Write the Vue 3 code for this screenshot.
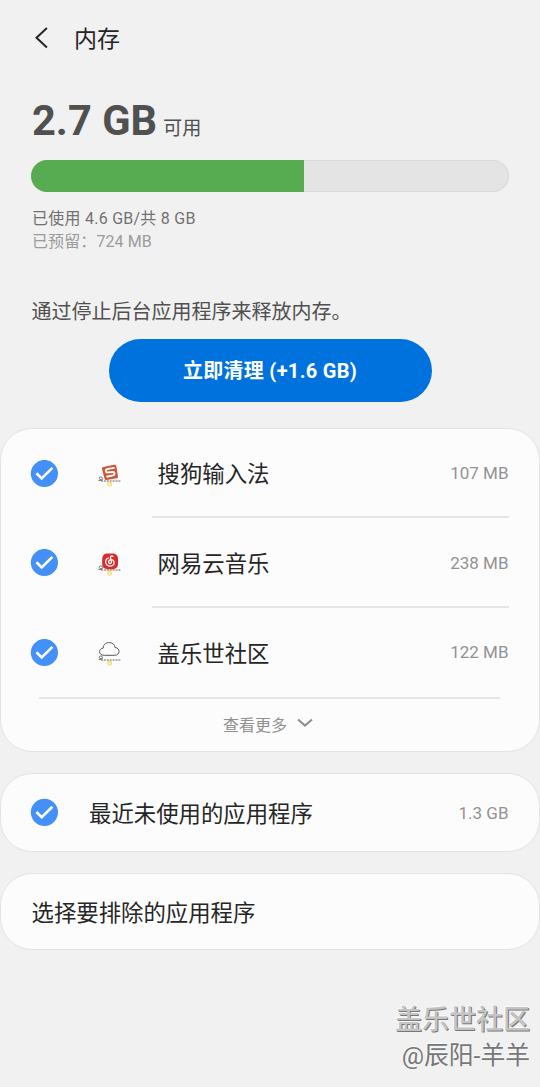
<script setup>
const apps = [
  { name: '搜狗输入法', size: '107 MB', icon: 'sogou' },
  { name: '网易云音乐', size: '238 MB', icon: 'music' },
  { name: '盖乐世社区', size: '122 MB', icon: 'cloud' },
]
const usedPercent = 57.1
</script>

<template>
  <main class="screen">
    <header class="bar">
      <svg class="back" width="16" height="24" viewBox="0 0 16 24">
        <path d="M13.900 1.900 3.500 11.700l10.400 9.800" fill="none" stroke="#252525" stroke-width="2" />
      </svg>
      <h1>内存</h1>
    </header>

    <section class="summary">
      <div class="free"><strong>2.7 GB</strong><span>可用</span></div>
      <div class="track"><div class="fill" :style="{ width: usedPercent + '%' }"></div></div>
      <p class="used">已使用 4.6 GB/共 8 GB</p>
      <p class="reserved">已预留：724 MB</p>
      <p class="tip">通过停止后台应用程序来释放内存。</p>
      <button class="clean">立即清理 (+1.6 GB)</button>
    </section>

    <section class="card list">
      <div v-for="app in apps" :key="app.name" class="row">
        <svg class="check" width="28" height="28" viewBox="0 0 28 28">
          <circle cx="14.400" cy="13.500" r="13.600" fill="#4290f8" />
          <path d="m6.400 13.200 5.300 5.200L22.400 7.900" fill="none" stroke="#fff" stroke-width="2.600" />
        </svg>
        <svg class="icon" width="28" height="28" viewBox="0 0 28 28">
          <g v-if="app.icon === 'sogou'" transform="translate(0 1.800)">
            <path d="M8.300 6.300 19 4q2-.3 2.300 1.300L23 15.600q.2 1.500-1.300 1.800L11.500 19.300q-1.700.2-2-1.500L7 8.100q-.2-1.500 1.300-1.800z" fill="#cd5636" />
            <path d="M19.600 7.100 12.800 8.100q-2.300.4-2 2.100t2.400 1.400l4.300-.4q1.900-.1 2.100 1.400t-1.600 2l-6.500 1.300" fill="none" stroke="#fff" stroke-width="1.900" />
          </g>
          <g v-else-if="app.icon === 'music'" transform="translate(-.3 2.500)">
            <rect x="7.500" y="3" width="15.800" height="15.800" rx="5" fill="#dc2a2b" />
            <path d="M18.200 5.900c-1.300-.9-2.700-.2-2.400 1.200l.9 3.900c.3 1.400-.6 2.200-1.600 2-2-.5-1.500-3.500.8-3.800 3.500-.3 4.600 3.500 2.300 5.500-2.500 1.900-6.800.7-7.200-2.500-.3-2.200.8-4 2.600-4.700" fill="none" stroke="#fff" stroke-width="1.300" stroke-linecap="round" />
          </g>
          <path v-else d="M9.300 17.300C3.300 17.300 3.100 10.800 8.200 10.100 8.400 6 11.400 4.400 14.400 4.600c3.300.1 5.500 2.200 5.700 4.900 5.500.5 5.200 7.800-.4 7.800z" fill="none" stroke="#555" stroke-width="1" />
          <path d="M3.500 21.500h2q2 0 2-1.800t-1.700-1.800q-1.500 0-1.500 1.500t2.200 1.200" fill="none" stroke="#555" stroke-width=".8" />
          <path d="M6 22h19.500" stroke="#555" stroke-width=".9" stroke-dasharray="2 .9" />
          <circle cx="14.600" cy="25.300" r="1.900" fill="#fff5be" stroke="#f5d96b" stroke-width="1.100" />
        </svg>
        <div class="body">
          <span class="name">{{ app.name }}</span>
          <span class="size">{{ app.size }}</span>
        </div>
      </div>
      <div class="more">
        <span>查看更多</span>
        <svg width="16" height="10" viewBox="0 0 16 10">
          <path d="m1 1.500 7 6 7-6" fill="none" stroke="#8f8f8f" stroke-width="2.200" />
        </svg>
      </div>
    </section>

    <section class="card unused">
      <svg class="check" width="28" height="28" viewBox="0 0 28 28">
        <circle cx="14.400" cy="14.300" r="13.600" fill="#4290f8" />
        <path d="m6.400 14 5.300 5.200L22.400 8.700" fill="none" stroke="#fff" stroke-width="2.600" />
      </svg>
      <span class="name">最近未使用的应用程序</span>
      <span class="size">1.3 GB</span>
    </section>

    <section class="card exclude"><span class="name">选择要排除的应用程序</span></section>

    <footer class="mark">
      <div class="community">盖乐世社区</div>
      <div class="author">@辰阳-羊羊</div>
    </footer>
  </main>
</template>

<style>
body { background: #f1f1f1; }
</style>

<style scoped>
* { box-sizing: border-box; }
.screen {
  width: 540px;
  height: 1087px;
  display: flex;
  flex-direction: column;
  overflow: hidden;
  background: #f1f1f1;
  color: #252525;
  font-family: Roboto, "Noto Sans CJK SC", sans-serif;
}
p, h1 { margin: 0; font-weight: 400; }
.bar { height: 76px; padding-left: 33px; display: flex; align-items: center; flex-shrink: 0; }
.bar h1 { margin-left: 25px; padding-top: 3px; font-size: 23px; line-height: 34px; }
.summary { height: 352px; padding: 21px 31px 0 31px; display: flex; flex-direction: column; flex-shrink: 0; }
.free { height: 48px; display: flex; align-items: baseline; color: #505050; line-height: 48px; padding-left: 1px; }
.free strong { font-size: 41.600px; font-weight: 700; }
.free span { margin-left: 6px; font-size: 19.200px; }
.track { height: 32px; margin-top: 15px; border-radius: 16px; overflow: hidden; background: #e4e4e4; box-shadow: inset 0 0 0 1px #d9d9d9; flex-shrink: 0; }
.fill { height: 100%; background: #57ab51; }
.used, .reserved { font-size: 16px; line-height: 23px; letter-spacing: .25px; padding-left: 1px; }
.used { margin-top: 15px; color: #717171; }
.reserved { color: #9b9b9b; letter-spacing: .1px; }
.tip { margin-top: 42px; padding-left: .5px; font-size: 20px; line-height: 34px; color: #505050; white-space: nowrap; }
.clean { width: 323px; height: 63px; margin: 10px 0 0 77.500px; padding: 0; border: 0; border-radius: 32px; background: #0072de; color: #fff; font: 700 20px/30px Roboto, "Noto Sans CJK SC", sans-serif; letter-spacing: .3px; flex-shrink: 0; }
.card { border: 1px solid #e3e3e3; border-radius: 32px; background: #fcfcfc; flex-shrink: 0; }
.list { height: 324px; }
.row { height: 89.500px; padding: 0 30.500px 0 29px; display: flex; align-items: center; }
.icon { margin: -2px 0 0 37px; }
.body { height: 100%; margin-left: 28.500px; padding-left: 6px; flex: 1; display: flex; align-items: center; justify-content: space-between; border-bottom: 2px solid #e6e6e6; }
.row:first-child .body { height: 88.500px; margin-bottom: 1px; }
.row:nth-child(3) .body { border-bottom-color: transparent; }
.name { padding-top: 4px; font-size: 22.400px; line-height: 34px; white-space: nowrap; }
.size { padding-top: 1px; font-size: 17px; color: #929292; white-space: nowrap; }
.more { height: 54px; margin: -1px 39px 0 38px; padding: 0 3px 2px 0; border-top: 2px solid #e6e6e6; display: flex; align-items: center; justify-content: center; gap: 10px; color: #909090; font-size: 16px; }
.more svg { margin-top: -1px; }
.unused { height: 79px; margin-top: 20.500px; padding: 0 30.500px 0 29px; display: flex; align-items: center; }
.unused .name { margin-left: 31px; }
.unused .size { margin-left: auto; }
.exclude { height: 77px; margin-top: 21.500px; padding-left: 30.500px; display: flex; align-items: center; }
.exclude .name { padding-top: 2px; }
.mark { margin: auto 10px 13px 0; text-align: right; color: #777; }
.community { font-size: 27px; line-height: 36px; font-weight: 500; color: #c4c4c4; text-shadow: 1px 1px 0 #777, -1px -1px 0 #fafafa; }
.author { font-size: 24.800px; line-height: 36px; text-shadow: -1px -1px 0 #fafafa; }
</style>
